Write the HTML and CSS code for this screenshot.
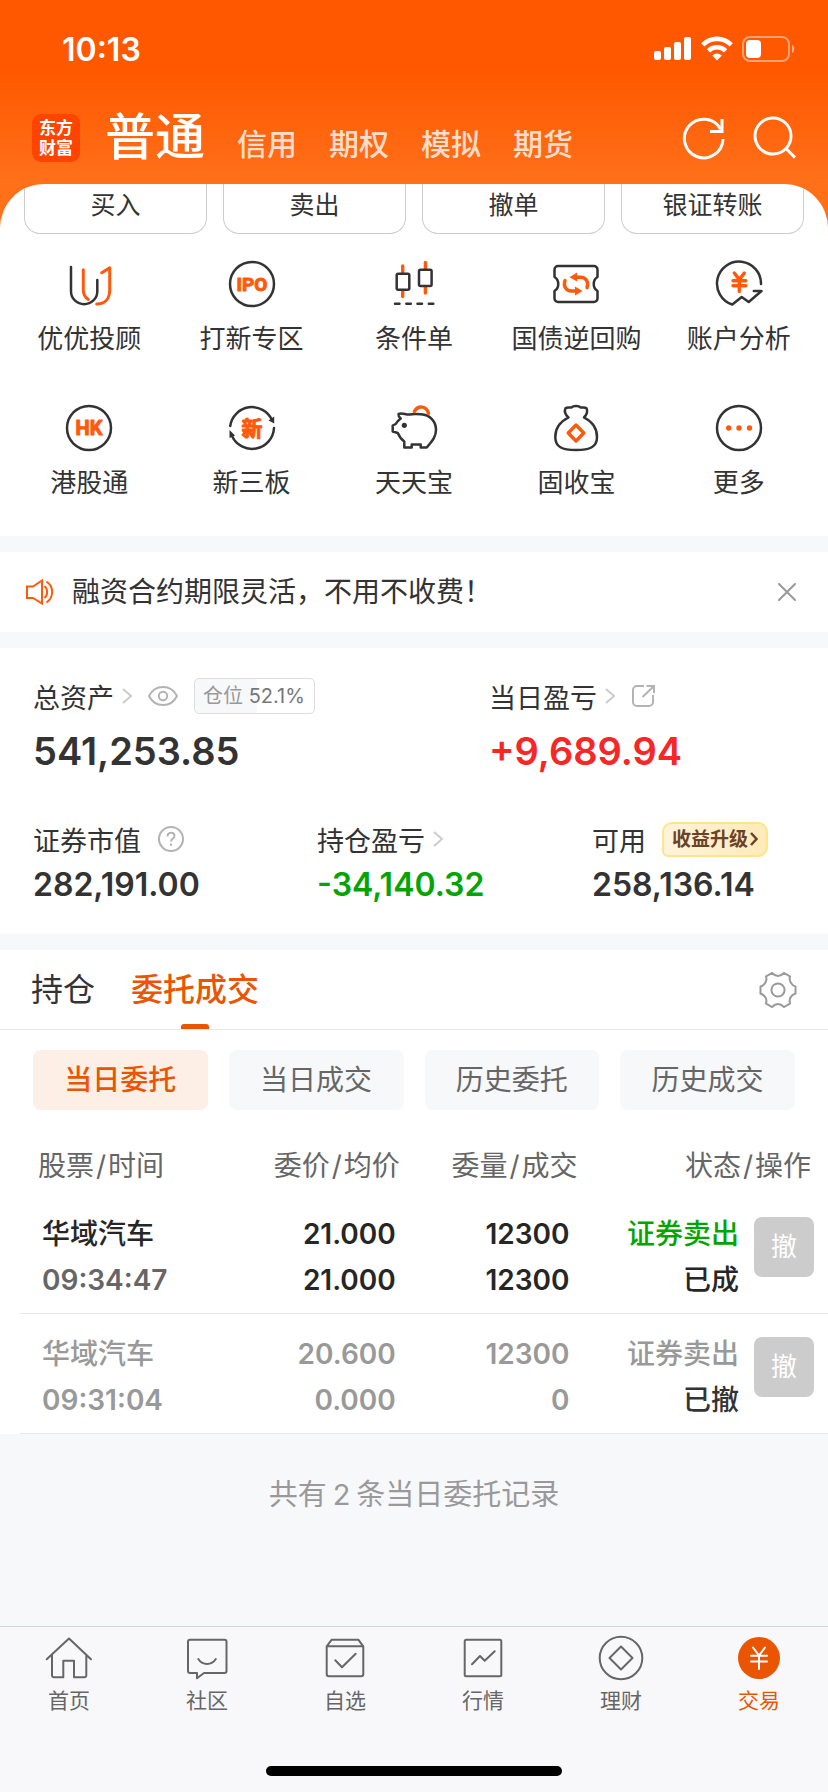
FILE: index.html
```html
<!DOCTYPE html>
<html lang="zh-CN">
<head>
<meta charset="utf-8">
<meta name="viewport" content="width=device-width, initial-scale=1">
<title>交易</title>
<link rel="stylesheet" href="styles.css">
</head>
<body>
<header class="header">
  <div class="status-bar">
    <time class="clock">10:13</time>
    <div class="status-icons">
      <svg width="38" height="26" viewBox="0 0 38 26" fill="#fff" aria-hidden="true">
        <rect x="0" y="15" width="7" height="9" rx="2"/><rect x="10" y="11" width="7" height="13" rx="2"/><rect x="20" y="6" width="7" height="18" rx="2"/><rect x="30" y="1" width="7" height="23" rx="2"/>
      </svg>
      <svg width="32" height="26" viewBox="0 0 32 26" fill="none" stroke="#fff" stroke-width="4.6" aria-hidden="true">
        <path d="M1.8 8.8a20 20 0 0 1 28.4 0M7.4 14.8a12.2 12.2 0 0 1 17.2 0"/><path d="M16 24.5l-4.8-5a7 7 0 0 1 9.6 0z" fill="#fff" stroke="none"/>
      </svg>
      <svg width="54" height="26" viewBox="0 0 54 26" aria-hidden="true">
        <rect x="1" y="1" width="46" height="24" rx="7" fill="none" stroke="#fff" stroke-opacity=".45" stroke-width="2"/><rect x="4" y="4" width="15" height="18" rx="4" fill="#fff"/><path d="M50 9c3 1 3 7 0 8z" fill="#fff" fill-opacity=".5"/>
      </svg>
    </div>
  </div>
  <div class="top-nav">
    <div class="logo"><span>东方</span><span>财富</span></div>
    <nav class="account-tabs">
      <button class="account-tab account-tab-active">普通</button>
      <button class="account-tab">信用</button>
      <button class="account-tab">期权</button>
      <button class="account-tab">模拟</button>
      <button class="account-tab">期货</button>
    </nav>
    <div class="nav-actions">
      <button class="icon-button" aria-label="刷新">
        <svg width="44" height="44" viewBox="0 0 44 44" fill="none" stroke="#fff" stroke-width="3"><path d="M41 23A19.3 19.3 0 1 1 38.6 13.2"/><path d="M40 3V15.4H28"/></svg>
      </button>
      <button class="icon-button" aria-label="搜索">
        <svg width="44" height="44" viewBox="0 0 44 44" fill="none" stroke="#fff" stroke-width="3"><circle cx="21" cy="20" r="18"/><path d="M33.5 32L43 41.6"/></svg>
      </button>
    </div>
  </div>
</header>

<main class="main">
  <section class="panel">
    <div class="quick-actions">
      <button class="quick-button">买入</button>
      <button class="quick-button">卖出</button>
      <button class="quick-button">撤单</button>
      <button class="quick-button">银证转账</button>
    </div>
    <div class="services">
      <button class="service">
        <svg class="service-icon" viewBox="0 0 48 48"><path class="dark" d="M6 7v24.500a13 12.500 0 0 0 26.300 0V20"/><path class="accent" d="M18.300 9.700V30c0 4 2 7.500 5 9.400M36.700 12.700l8-4.800V30c0 9-5 14-13 14"/></svg>
        <span>优优投顾</span>
      </button>
      <button class="service">
        <svg class="service-icon" viewBox="0 0 48 48"><circle class="dark" cx="24" cy="24" r="22"/><text class="mark mark-latin" x="24" y="31">IPO</text></svg>
        <span>打新专区</span>
      </button>
      <button class="service">
        <svg class="service-icon" viewBox="0 0 48 48"><path class="accent thick" d="M12.700 6v6.500M12.700 31v5.500M35.400 2.500v6M35.400 27v6"/><rect class="dark" x="6.700" y="13.700" width="12.600" height="16" rx="1.500"/><rect class="dark" x="29" y="9.700" width="12.600" height="16.300" rx="1.500"/><path class="dark" d="M5 43.700h4.500M16.300 43.700h4.500M27.500 43.700h4.500M38.800 43.700h4.500"/></svg>
        <span>条件单</span>
      </button>
      <button class="service">
        <svg class="service-icon" viewBox="0 0 48 48"><path class="dark" d="M6 6h36a3.500 3.500 0 0 1 3.500 3.500V17c-5 3-5 11 0 14v7.500A3.500 3.500 0 0 1 42 42H6a3.500 3.500 0 0 1-3.500-3.500V31c5-3 5-11 0-14V9.500A3.500 3.500 0 0 1 6 6z"/><path class="accent thick" d="M23 17.200h5.500c5.500 0 8.500 5 6.500 10.500M25 31h-5.500c-5.500 0-8.500-5-6.500-10.500"/><path class="accent-fill" d="M17.500 17.200l7.500-4.700v9zM30.500 31L23 26.500v9z"/></svg>
        <span>国债逆回购</span>
      </button>
      <button class="service">
        <svg class="service-icon" viewBox="0 0 48 48"><path class="dark" d="M46 24A22 22 0 1 0 17.300 44.500l9.400-7.500 7 5L46.500 31h-7.700"/><path class="accent thick" d="M19.300 13l5 6.600 5-6.600M24.300 19.600v12M18 20.700h12.800M18 25.700h12.800"/></svg>
        <span>账户分析</span>
      </button>
      <button class="service">
        <svg class="service-icon" viewBox="0 0 48 48"><circle class="dark" cx="24" cy="24" r="22"/><text class="mark mark-latin mark-hk" x="24" y="31">HK</text></svg>
        <span>港股通</span>
      </button>
      <button class="service">
        <svg class="service-icon" viewBox="0 0 48 48"><path class="dark" d="M2.200 22A22 22 0 0 1 44 16M46 24A22 22 0 0 1 4 32"/><path class="dark-fill" d="M40.500 16.500l5.700-4v7zM7 31.500l-5.500 2.500v-8z"/><text class="mark mark-cjk" x="24" y="32">新</text></svg>
        <span>新三板</span>
      </button>
      <button class="service">
        <svg class="service-icon" viewBox="0 0 48 48"><path class="dark" d="M8.500 10c4-1.500 7 .8 11 .5 3-.6 8-.4 11.500-.2C40 11 46 17 46 26c0 7-4 11-9.300 17.500h-6v-3H21.700V43.500h-7.400V37.500c-3-2-5-5-6.500-8.500L2.700 27.500v-6l3-1.500c1.300-2.500 3-4 5-5.500C9 13 8.200 12 8.500 10z"/><circle class="dark-fill" cx="14.300" cy="21.300" r="2.600"/><path class="accent thick" d="M24.300 7.500c4-7 12.500-5.500 14.200 2"/></svg>
        <span>天天宝</span>
      </button>
      <button class="service">
        <svg class="service-icon" viewBox="0 0 48 48"><path class="dark" d="M16.500 13.500c-3.500-3-4.500-6-3-9.200 2-1.500 4.500-.3 6-.8 1.500-1.800 7.500-2 9 0 1.500.5 4-.7 6 .8 1.500 3.200.5 6.200-2.500 9.200C41 18 45 25 45 33c0 10-7 13-21 13S3.300 43 3.300 33c0-8 4-15 13.200-19.500z"/><path class="accent thick" d="M24 21l7.800 8-7.800 8-7.800-8z"/></svg>
        <span>固收宝</span>
      </button>
      <button class="service">
        <svg class="service-icon" viewBox="0 0 48 48"><circle class="dark" cx="24" cy="24" r="22"/><g class="accent-fill"><circle cx="13.700" cy="24" r="2.700"/><circle cx="24" cy="24" r="2.700"/><circle cx="34.500" cy="24" r="2.700"/></g></svg>
        <span>更多</span>
      </button>
    </div>
  </section>

  <section class="notice">
    <svg width="28" height="26" viewBox="0 0 28 26" fill="none" stroke="#ff5a0c" stroke-width="2" aria-hidden="true"><path d="M1 7.500h6L16 1.500v23L7 19H1zM18.500 7c3.500 3 3.500 9 0 12M20.500 2.500c7.500 5 7.500 16 0 21"/></svg>
    <p class="notice-text">融资合约期限灵活，不用不收费！</p>
    <button class="icon-button" aria-label="关闭">
      <svg width="18" height="18" viewBox="0 0 18 18" fill="none" stroke="#999" stroke-width="2" stroke-linecap="round"><path d="M1 1l16 16M17 1L1 17"/></svg>
    </button>
  </section>

  <section class="assets">
    <div class="asset-row asset-row-main">
      <div class="asset">
        <div class="asset-label">
          <a class="asset-link" href="#">总资产<svg class="chevron" viewBox="0 0 10 16"><path d="M1 1l8 7-8 7"/></svg></a>
          <button class="icon-button" aria-label="隐藏金额"><svg width="30" height="20" viewBox="0 0 30 20" fill="none" stroke="#b3b3b3" stroke-width="2"><path d="M1 10C7-2 23-2 29 10 23 22 7 22 1 10z"/><circle cx="15" cy="10" r="4.200"/></svg></button>
          <span class="position"><span class="position-name">仓位</span> 52.1%</span>
        </div>
        <strong class="amount">541,253.85</strong>
      </div>
      <div class="asset">
        <div class="asset-label">
          <a class="asset-link" href="#">当日盈亏<svg class="chevron" viewBox="0 0 10 16"><path d="M1 1l8 7-8 7"/></svg></a>
          <button class="icon-button" aria-label="分享"><svg width="24" height="24" viewBox="0 0 24 24" fill="none" stroke="#b3b3b3" stroke-width="2"><path d="M13 2H6a4 4 0 0 0-4 4v12a4 4 0 0 0 4 4h12a4 4 0 0 0 4-4v-7"/><path d="M15.500 2H23v7M23 2L11.500 13"/></svg></button>
        </div>
        <strong class="amount up">+9,689.94</strong>
      </div>
    </div>
    <div class="asset-row asset-row-detail">
      <div class="asset">
        <div class="asset-label"><span>证券市值</span>
          <button class="icon-button" aria-label="说明"><svg width="28" height="28" viewBox="0 0 28 28" fill="none" stroke="#b3b3b3" stroke-width="2"><circle cx="14" cy="14" r="12"/><path d="M10.500 11.500c0-5 7-5 7-.7 0 2.700-3.500 2.700-3.500 5.700M14 18.500v2.200"/></svg></button>
        </div>
        <strong class="amount">282,191.00</strong>
      </div>
      <div class="asset">
        <div class="asset-label"><a class="asset-link" href="#">持仓盈亏<svg class="chevron" viewBox="0 0 10 16"><path d="M1 1l8 7-8 7"/></svg></a></div>
        <strong class="amount down">-34,140.32</strong>
      </div>
      <div class="asset">
        <div class="asset-label"><span>可用</span>
          <button class="upgrade">收益升级<svg width="8" height="14" viewBox="0 0 8 14" fill="none" stroke="#6b4226" stroke-width="2.500"><path d="M1 1l5.500 6L1 13"/></svg></button>
        </div>
        <strong class="amount">258,136.14</strong>
      </div>
    </div>
  </section>

  <section class="orders">
    <div class="order-tabs">
      <button class="order-tab">持仓</button>
      <button class="order-tab order-tab-active">委托成交</button>
      <button class="icon-button order-settings" aria-label="设置">
        <svg width="38" height="38" viewBox="0 0 38 38" fill="none" stroke="#999" stroke-width="2"><circle cx="19" cy="19" r="6.600"/><path d="M13 2Q16 5 19 5T25 2L31 5.500Q30 9 32 12T36.500 15.500V22.500Q33 23.500 31.500 26.500T31 32.500L25 36Q22 33 19 33T13 36L7 32.500Q8 29 6.500 26.500T1.500 22.500V15.500Q5 14.500 6.500 11.500T7 5.500z"/></svg>
      </button>
    </div>
    <div class="filters">
      <button class="filter filter-active">当日委托</button>
      <button class="filter">当日成交</button>
      <button class="filter">历史委托</button>
      <button class="filter">历史成交</button>
    </div>
    <table class="order-table">
      <colgroup><col class="col-stock"><col class="col-price"><col class="col-volume"><col class="col-state"><col class="col-action"></colgroup>
      <thead>
        <tr><th>股票<span class="slash">/</span>时间</th><th>委价<span class="slash">/</span>均价</th><th>委量<span class="slash">/</span>成交</th><th colspan="2">状态<span class="slash">/</span>操作</th></tr>
      </thead>
      <tbody>
        <tr>
          <td><div>华域汽车</div><div class="number order-time">09:34:47</div></td>
          <td class="number"><div>21.000</div><div>21.000</div></td>
          <td class="number"><div>12300</div><div>12300</div></td>
          <td><div class="down">证券卖出</div><div>已成</div></td>
          <td><button class="cancel" disabled>撤</button></td>
        </tr>
        <tr class="cancelled">
          <td><div>华域汽车</div><div class="number">09:31:04</div></td>
          <td class="number"><div>20.600</div><div>0.000</div></td>
          <td class="number"><div>12300</div><div>0</div></td>
          <td><div>证券卖出</div><div class="order-state">已撤</div></td>
          <td><button class="cancel" disabled>撤</button></td>
        </tr>
      </tbody>
    </table>
  </section>
  <p class="summary">共有<span class="summary-count">2</span>条当日委托记录</p>
</main>

<footer class="footer">
  <nav class="tab-bar">
    <a class="tab" href="#"><svg class="tab-icon" viewBox="0 0 48 48"><path d="M1.700 25.300L24 4.500l22 20.800M7 21v20.500a1.800 1.800 0 0 0 1.800 1.800h9.500V26.700H29v16.600h10.500a1.800 1.800 0 0 0 1.800-1.800V21"/></svg>首页</a>
    <a class="tab" href="#"><svg class="tab-icon" viewBox="0 0 48 48"><path d="M7 5.700h34.500a2 2 0 0 1 2 2V37a2 2 0 0 1-2 2H21l-7 5.300V39H7a2 2 0 0 1-2-2V7.700a2 2 0 0 1 2-2zM15.300 25c4 6.500 13.500 6.500 17.500 0"/></svg>社区</a>
    <a class="tab" href="#"><svg class="tab-icon" viewBox="0 0 48 48"><path d="M5.700 12.300h36.600V40a2.300 2.300 0 0 1-2.300 2.300H8A2.300 2.300 0 0 1 5.700 40zl5-6.600h26.600l5 6.600M14.300 26.300l6.700 7 13.700-13.600"/></svg>自选</a>
    <a class="tab" href="#"><svg class="tab-icon" viewBox="0 0 48 48"><rect x="5.700" y="5.700" width="36.600" height="36.600" rx="1.500"/><path d="M13 30.300l8-8.300 4.700 4.700 10-9.400"/></svg>行情</a>
    <a class="tab" href="#"><svg class="tab-icon" viewBox="0 0 48 48"><circle cx="24" cy="24" r="21.300"/><path d="M24 12.500L35.500 24 24 35.500 12.500 24z"/></svg>理财</a>
    <a class="tab tab-active" href="#"><svg class="tab-icon" viewBox="0 0 48 48"><circle class="tab-disc" cx="24" cy="24" r="21"/><path class="tab-yen" d="M18 13.500l6 8 6-8M24 21.500V35M16 21.700h16M16 27.500h16"/></svg>交易</a>
  </nav>
  <div class="home-indicator"></div>
</footer>
</body>
</html>
```
FILE: styles.css
```css
* { box-sizing: border-box; }
body {
  margin: 0;
  min-height: 100vh;
  display: flex;
  flex-direction: column;
  background: #f7f8fa;
  color: #333;
  font-family: Inter, "Noto Sans CJK SC", sans-serif;
  font-size: 28px;
}
button { margin: 0; padding: 0; border: 0; background: none; color: inherit; font: inherit; }
a { color: inherit; text-decoration: none; }
p { margin: 0; }
svg { display: block; flex: none; }
.icon-button { flex: none; }

/* Header */
.header {
  padding-bottom: 44px;
  margin-bottom: -44px;
  background: linear-gradient(#ff5800 72px, #ff7019 180px);
  color: #fff;
}
.status-bar {
  display: flex;
  align-items: center;
  justify-content: space-between;
  height: 98px;
  padding: 0 32px 0 62px;
}
.clock { font-size: 32px; font-weight: 600; }
.status-icons { display: flex; align-items: center; gap: 9px; }
.top-nav {
  display: flex;
  align-items: center;
  height: 86px;
  padding: 0 32px 6px;
}
.logo {
  display: flex;
  flex-direction: column;
  justify-content: center;
  width: 48px;
  height: 48px;
  border-radius: 9px;
  background: #ff4400;
  font-size: 17px;
  font-weight: 700;
  line-height: 20px;
  text-align: center;
}
.account-tabs {
  display: flex;
  flex: 1;
  align-items: baseline;
  gap: 32px;
  padding: 5px 0 0 25px;
  white-space: nowrap;
}
.account-tab { color: #ffddcb; font-size: 30px; font-weight: 500; line-height: 60px; }
.account-tab-active { color: #fff; font-size: 50px; }
.nav-actions { display: flex; gap: 26px; }

/* Quick actions and services */
.main { display: flex; flex: 1; flex-direction: column; }
.panel {
  overflow: hidden;
  padding-bottom: 35px;
  border-radius: 44px 44px 0 0;
  background: #fff;
}
.quick-actions {
  display: grid;
  grid-template-columns: repeat(4, 1fr);
  gap: 16px;
  padding: 0 24px;
}
.quick-button {
  padding-bottom: 7px;
  border: 1px solid #ccc;
  border-top: 0;
  border-radius: 0 0 16px 16px;
  font-size: 25px;
  line-height: 42px;
}
.services {
  display: grid;
  grid-template-columns: repeat(5, 1fr);
  row-gap: 47px;
  padding: 26px 8px 0;
}
.service {
  display: flex;
  flex-direction: column;
  align-items: center;
  gap: 13px;
  font-size: 26px;
  line-height: 36px;
  white-space: nowrap;
}
.service-icon { width: 48px; height: 48px; fill: none; stroke-linecap: round; stroke-linejoin: round; }
.dark { stroke: #333; stroke-width: 2.5; }
.accent { stroke: #ff5a0c; stroke-width: 3; }
.thick { stroke-width: 3.4; }
.dark-fill { fill: #333; }
.accent-fill { fill: #ff5a0c; }
.mark { fill: #ff5a0c; stroke: #ff5a0c; stroke-width: 1; text-anchor: middle; font-weight: 700; }
.mark-latin { font-family: Roboto, sans-serif; font-size: 19px; }
.mark-hk { font-size: 20px; }
.mark-cjk { font-family: "Noto Sans CJK SC", sans-serif; font-size: 21px; }

/* Notice */
.notice {
  display: flex;
  align-items: center;
  gap: 18px;
  margin-top: 16px;
  padding: 0 32px 0 26px;
  background: #fff;
}
.notice-text { flex: 1; line-height: 80px; }

/* Assets */
.assets { margin-top: 16px; padding: 25px 33px 26px; background: #fff; font-size: 27px; }
.asset-row { display: grid; }
.asset-row-main { grid-template-columns: 456fr 306fr; margin-bottom: 33px; }
.asset-row-detail { grid-template-columns: 284fr 275fr 203fr; }
.asset-label { display: flex; align-items: center; gap: 16px; height: 46px; white-space: nowrap; }
.asset-link { display: flex; align-items: center; gap: 8px; }
.chevron { width: 10px; height: 16px; fill: none; stroke: #ccc; stroke-width: 2; }
.position {
  padding: 0 9px 0 8px;
  border: 1px solid #ddd;
  border-radius: 5px;
  background: linear-gradient(90deg, #f7f8fa 52%, #fff 52%);
  color: #777;
  font-size: 20px;
  line-height: 34px;
}
.position-name { color: #999; }
.amount { display: block; font-weight: 600; white-space: nowrap; }
.asset-row-main .amount { font-size: 38px; line-height: 64px; }
.asset-row-detail .amount { font-size: 32px; line-height: 46px; }
.up { color: #f92626; }
.down { color: #04a404; }
.upgrade {
  display: flex;
  align-items: center;
  gap: 2px;
  padding: 0 8px;
  border: 2px solid #ffe48a;
  border-radius: 10px 10px 10px 6px;
  background: linear-gradient(90deg, #fff3dc, #ffebb8);
  color: #6b4226;
  font-size: 19px;
  font-weight: 700;
  line-height: 31px;
}

/* Orders */
.orders { margin-top: 16px; background: #fff; }
.order-tabs {
  display: flex;
  gap: 36px;
  padding: 0 31px;
  border-bottom: 1px solid #e8e8e8;
}
.order-tab { position: relative; font-size: 32px; line-height: 79px; }
.order-tab-active { color: #ea5504; font-weight: 500; }
.order-tab-active::after {
  content: "";
  position: absolute;
  bottom: 0;
  left: 50%;
  width: 28px;
  height: 5px;
  border-radius: 3px 3px 0 0;
  background: #ea5504;
  transform: translateX(-50%);
}
.order-settings { margin-left: auto; }
.filters {
  display: grid;
  grid-template-columns: repeat(4, 1fr);
  gap: 21px;
  padding: 20px 33px 28px;
}
.filter { border-radius: 8px; background: #f7f8fa; color: #666; line-height: 60px; }
.filter-active { background: #fdeee6; color: #ea5504; font-weight: 500; }
.order-table {
  width: calc(100% - 20px);
  margin-left: 20px;
  border-collapse: collapse;
  table-layout: fixed;
  color: #262626;
  line-height: 46px;
  text-align: right;
  white-space: nowrap;
}
.col-stock { width: 26%; }
.col-price { width: 21%; }
.col-volume { width: 22%; }
.col-state { width: 20%; }
.col-action { width: 11%; }
.order-table th { padding: 0; color: #666; font-weight: 400; line-height: 56px; }
.order-table th:first-child { padding-left: 18px; text-align: left; }
.order-table th:last-child { padding-right: 17px; }
.slash { margin: 0 2px; }
.order-table td { padding: 17px 4px 10px 0; border-bottom: 1px solid #e8e8e8; font-weight: 500; vertical-align: top; }
.order-table td:first-child { padding-left: 22px; text-align: left; }
.order-table td:nth-child(3) { padding-right: 8px; }
.order-table td:nth-child(4) { padding-right: 0; }
.order-table td:last-child { padding: 23px 14px 0 0; }
.order-table .number { font-weight: 600; }
.order-table .order-time { color: #666; }
.cancelled { color: #999; }
.cancelled .order-state { color: #333; }
.cancel {
  display: block;
  width: 60px;
  margin-left: auto;
  border-radius: 8px;
  background: #ccc;
  color: #fff;
  font-size: 26px;
  font-weight: 400;
  line-height: 60px;
}
.summary { flex: 1; padding-top: 40px; color: #999; font-size: 29px; line-height: 42px; text-align: center; }
.summary-count { margin: 0 6px; }

/* Bottom navigation */
.footer { border-top: 1px solid #d5d6d8; background: #f8f8fa; }
.tab-bar { display: grid; grid-template-columns: repeat(6, 1fr); padding-top: 7px; }
.tab {
  display: flex;
  flex-direction: column;
  align-items: center;
  gap: 5px;
  color: #666;
  font-size: 21px;
  line-height: 28px;
}
.tab-icon { width: 48px; height: 48px; fill: none; stroke: #666; stroke-width: 2; stroke-linecap: round; stroke-linejoin: round; }
.tab-active { color: #ea5504; }
.tab-disc { fill: #ea5504; stroke: none; }
.tab-yen { stroke: #fff; }
.home-indicator { width: 296px; height: 10px; margin: 51px auto 16px; border-radius: 5px; background: #000; }
```
